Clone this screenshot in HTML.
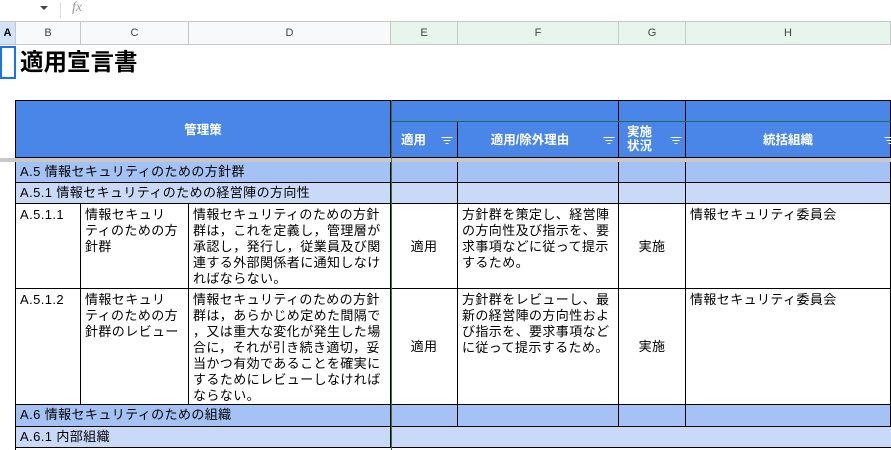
<!DOCTYPE html>
<html><head><meta charset="utf-8"><style>
*{margin:0;padding:0;box-sizing:border-box}
body{width:891px;height:450px;overflow:hidden;background:#fff;position:relative;font-family:"Liberation Sans","Noto Sans CJK JP",sans-serif;font-size:13px;color:#000}
.a{position:absolute}
.ch{position:absolute;top:22px;height:23px;background:#f8f9fa;border-right:1px solid #c7c7c7;border-bottom:1px solid #c7c7c7;text-align:center;line-height:22px;font-size:11px;color:#444}
.g{background:#e6f6ec}
.c{position:absolute;border-right:1px solid #000;border-bottom:1px solid #000;line-height:16px;padding:3px 4px 2px;overflow:hidden;white-space:nowrap;letter-spacing:0.4px}
.hb{background:#4a86e8;color:#fff;font-weight:bold;font-size:12.5px;letter-spacing:0}
.r1{background:#a4c2f4}
.r2{background:#c9daf8}
.ctr{display:flex;align-items:center;justify-content:center;text-align:center}
.f{position:absolute;width:12px;height:8px}
.f i{position:absolute;height:1px;background:#fff;left:50%;transform:translateX(-50%)}
</style></head><body>
<div class="a" style="left:40px;top:6px;width:0;height:0;border-left:4px solid transparent;border-right:4px solid transparent;border-top:4px solid #444"></div>
<div class="a" style="left:60px;top:2px;width:1px;height:16px;background:#ddd"></div>
<div class="a" style="left:72px;top:0px;font-family:'Liberation Serif',serif;font-style:italic;color:#999;font-size:14px">fx</div>
<div class="a" style="left:0;top:21px;width:891px;height:1px;background:#c7c7c7"></div>
<div class="ch" style="left:0;width:16px;background:#d3e3fd;font-weight:bold;color:#000">A</div>
<div class="ch" style="left:16px;width:65px">B</div>
<div class="ch" style="left:81px;width:108px">C</div>
<div class="ch" style="left:189px;width:202px">D</div>
<div class="ch g" style="left:391px;width:67px">E</div>
<div class="ch g" style="left:458px;width:161px">F</div>
<div class="ch g" style="left:619px;width:67px">G</div>
<div class="ch g" style="left:686px;width:205px">H</div>
<div class="a" style="left:0;top:46px;width:16px;height:33px;border:2px solid #1a73e8"></div>
<div class="a" style="left:20px;top:46px;font-size:23.5px;font-weight:bold;line-height:32px">適用宣言書</div>
<div class="a" style="left:16px;top:100px;width:875px;height:1px;background:#000"></div>
<div class="a" style="left:15px;top:100px;width:1px;height:350px;background:#000"></div>
<div class="c hb ctr" style="left:16px;top:101px;width:375px;height:57px">管理策</div>
<div class="c hb" style="left:391px;top:101px;width:228px;height:20px;border-bottom:none"></div>
<div class="c hb" style="left:619px;top:101px;width:67px;height:20px;border-bottom:none"></div>
<div class="c hb" style="left:686px;top:101px;width:205px;height:20px;border-bottom:none"></div>
<div class="a" style="left:391px;top:121px;width:500px;height:1px;background:#1e6b5a"></div>
<div class="c hb ctr" style="left:391px;top:122px;width:67px;height:36px;justify-content:flex-start;padding-left:10px">適用</div>
<div class="c hb ctr" style="left:458px;top:122px;width:161px;height:36px;padding-right:20px">適用/除外理由</div>
<div class="c hb" style="left:619px;top:122px;width:67px;height:36px;line-height:14px;padding:3px 8px">実施<br>状況</div>
<div class="c hb ctr" style="left:686px;top:122px;width:205px;height:36px">統括組織</div>
<div class="f" style="left:441px;top:137px"><i style="top:0;width:11px"></i><i style="top:3px;width:7px"></i><i style="top:6px;width:3px"></i></div>
<div class="f" style="left:603px;top:137px"><i style="top:0;width:11px"></i><i style="top:3px;width:7px"></i><i style="top:6px;width:3px"></i></div>
<div class="f" style="left:670px;top:137px"><i style="top:0;width:11px"></i><i style="top:3px;width:7px"></i><i style="top:6px;width:3px"></i></div>
<div class="f" style="left:884px;top:137px"><i style="top:0;width:11px"></i><i style="top:3px;width:7px"></i><i style="top:6px;width:3px"></i></div>
<div class="a" style="left:0;top:158px;width:891px;height:4px;background:#c8c8c8"></div>
<div class="c r1" style="left:16px;top:162px;width:375px;height:21px;padding-top:2px">A.5 情報セキュリティのための方針群</div>
<div class="c r1" style="left:391px;top:162px;width:67px;height:21px"></div>
<div class="c r1" style="left:458px;top:162px;width:161px;height:21px"></div>
<div class="c r1" style="left:619px;top:162px;width:67px;height:21px"></div>
<div class="c r1" style="left:686px;top:162px;width:205px;height:21px"></div>
<div class="c r2" style="left:16px;top:183px;width:375px;height:21px;padding-top:2px">A.5.1 情報セキュリティのための経営陣の方向性</div>
<div class="c r2" style="left:391px;top:183px;width:67px;height:21px"></div>
<div class="c r2" style="left:458px;top:183px;width:161px;height:21px"></div>
<div class="c r2" style="left:619px;top:183px;width:67px;height:21px"></div>
<div class="c r2" style="left:686px;top:183px;width:205px;height:21px"></div>
<div class="c" style="left:16px;top:204px;width:65px;height:85px">A.5.1.1</div>
<div class="c" style="left:81px;top:204px;width:108px;height:85px">情報セキュリ<br>ティのための方<br>針群</div>
<div class="c" style="left:189px;top:204px;width:202px;height:85px">情報セキュリティのための方針<br>群は，これを定義し，管理層が<br>承認し，発行し，従業員及び関<br>連する外部関係者に通知しなけ<br>ればならない。</div>
<div class="c ctr" style="left:391px;top:204px;width:67px;height:85px">適用</div>
<div class="c" style="left:458px;top:204px;width:161px;height:85px">方針群を策定し、経営陣<br>の方向性及び指示を、要<br>求事項などに従って提示<br>するため。</div>
<div class="c ctr" style="left:619px;top:204px;width:67px;height:85px">実施</div>
<div class="c" style="left:686px;top:204px;width:205px;height:85px">情報セキュリティ委員会</div>
<div class="c" style="left:16px;top:289px;width:65px;height:116px">A.5.1.2</div>
<div class="c" style="left:81px;top:289px;width:108px;height:116px">情報セキュリ<br>ティのための方<br>針群のレビュー</div>
<div class="c" style="left:189px;top:289px;width:202px;height:116px">情報セキュリティのための方針<br>群は，あらかじめ定めた間隔で<br>，又は重大な変化が発生した場<br>合に，それが引き続き適切，妥<br>当かつ有効であることを確実に<br>するためにレビューしなければ<br>ならない。</div>
<div class="c ctr" style="left:391px;top:289px;width:67px;height:116px">適用</div>
<div class="c" style="left:458px;top:289px;width:161px;height:116px">方針群をレビューし、最<br>新の経営陣の方向性およ<br>び指示を、要求事項など<br>に従って提示するため。</div>
<div class="c ctr" style="left:619px;top:289px;width:67px;height:116px">実施</div>
<div class="c" style="left:686px;top:289px;width:205px;height:116px">情報セキュリティ委員会</div>
<div class="c r1" style="left:16px;top:405px;width:375px;height:22px;padding-top:2px">A.6 情報セキュリティのための組織</div>
<div class="c r1" style="left:391px;top:405px;width:67px;height:22px"></div>
<div class="c r1" style="left:458px;top:405px;width:161px;height:22px"></div>
<div class="c r1" style="left:619px;top:405px;width:67px;height:22px"></div>
<div class="c r1" style="left:686px;top:405px;width:205px;height:22px"></div>
<div class="c r2" style="left:16px;top:427px;width:375px;height:21px;padding-top:2px">A.6.1 内部組織</div>
<div class="c r2" style="left:391px;top:427px;width:500px;height:21px;border-right:none"></div>
<div class="a" style="left:391px;top:100px;width:1px;height:350px;background:#1e7a4a"></div>
</body></html>
